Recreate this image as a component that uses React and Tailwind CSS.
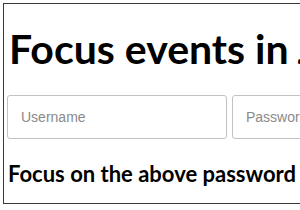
export default function App() {
  return (
    <div className="w-[300px] h-[210px] overflow-hidden bg-white">
      <div
        className="ml-[3px] mt-[3px] w-[340px] h-[201px] border border-[#3a3a3a] bg-white"
        style={{ fontFamily: 'Lato, "Open Sans", sans-serif' }}
      >
        <h1 className="pl-[5px] pt-[21px] text-[41px] leading-[48px] font-bold text-black whitespace-nowrap">
          Focus events in JavaScript
        </h1>
        <div className="flex gap-[5px] pl-[3px] mt-[22px]">
          <input
            type="text"
            placeholder="Username"
            className="shrink-0 w-[220px] h-[44px] border border-[#c2c2c2] rounded-[3px] px-[13px] text-[14px] placeholder:text-[#8a8a8a] outline-none"
            style={{ fontFamily: '"Liberation Sans", Arial, sans-serif' }}
          />
          <input
            type="password"
            placeholder="Password"
            className="shrink-0 w-[220px] h-[44px] border border-[#c2c2c2] rounded-[3px] px-[13px] text-[14px] placeholder:text-[#8a8a8a] outline-none"
            style={{ fontFamily: '"Liberation Sans", Arial, sans-serif' }}
          />
        </div>
        <p className="pl-[4px] mt-[21px] text-[22px] leading-[28px] font-bold text-black whitespace-nowrap">
          Focus on the above password field
        </p>
      </div>
    </div>
  );
}
